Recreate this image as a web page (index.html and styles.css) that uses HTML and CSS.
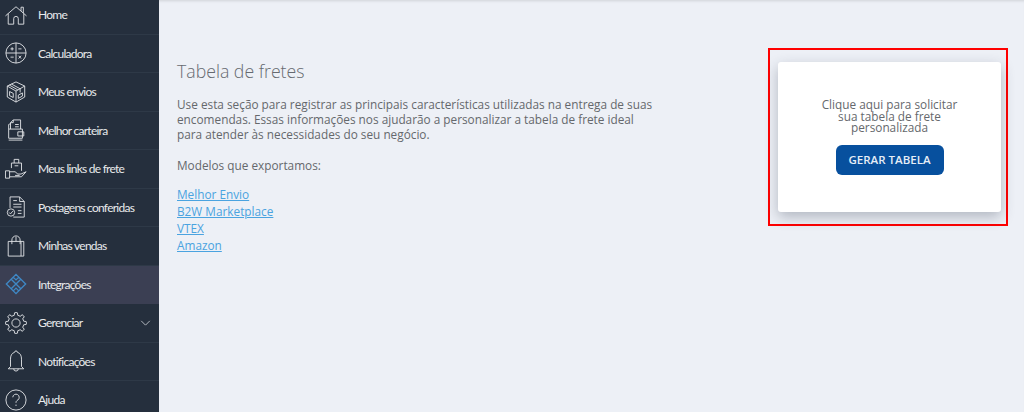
FILE: index.html
```html
<!DOCTYPE html>
<html lang="en">
  <head>
    <meta charset="UTF-8" />
    <title>Tabela de fretes</title>
    <link rel="stylesheet" href="styles.css">
  </head>
  <body>
    <nav class="sidebar">
      <a class="nav-item" href="#">
        <svg class="nav-icon" viewBox="0 0 24 24"><path d="M.5 13 12 3l11.500 10M3.500 10.500V22h6v-6a2.500 2.500 0 0 1 5 0v6h6V10.500M17.500 7.500V3.500h2.500v6.500"/></svg>
        <span>Home</span>
      </a>
      <a class="nav-item" href="#">
        <svg class="nav-icon" viewBox="0 0 24 24"><circle cx="12" cy="12" r="11"/><path d="M1 12h22M12 1v22M6 7.500h3.500M7.750 5.700v3.600M14.500 7.500H18M6 16.500h3.500M7.750 14.700v.1M7.750 18.200v.1M14.800 15l2.800 3M17.600 15l-2.800 3"/></svg>
        <span>Calculadora</span>
      </a>
      <a class="nav-item" href="#">
        <svg class="nav-icon" viewBox="0 0 24 24"><path d="M12 1 21.500 5.500v12L12 23l-9.500-5.500v-12zM2.500 5.500 12 11l9.500-5.500M12 11v12M7 3.300l9.500 5.200v4M5 11.500l4 2v4.500l-4-2zM14.500 15.500l4.500-2.500v3.500l-4.500 2.500zM4.500 4.300 14 9.700"/></svg>
        <span>Meus envios</span>
      </a>
      <a class="nav-item" href="#">
        <svg class="nav-icon" viewBox="0 0 24 24"><path d="M6 11V4l3-3h8v10M9 1v3H6M11 6h4M11 8.500h4M4 11h15v10H4zM4 23h15M14 14h6.500v4.500H14z"/><path d="M4 11V6l2-1"/></svg>
        <span>Melhor carteira</span>
      </a>
      <a class="nav-item" href="#">
        <svg class="nav-icon" viewBox="0 0 24 24"><path d="M7 11V5.500h11V14M10 5.500V1.500h5v4M10.500 8.500h4M.5 14h4.500v8H.5zM5 15h6l3 2.500h3.500l5.500-2.500-5 5.500H5M11 19h5"/></svg>
        <span>Meus links de frete</span>
      </a>
      <a class="nav-item" href="#">
        <svg class="nav-icon" viewBox="0 0 24 24"><path d="M5.500 13V1h10.500l5 5v17H9M16 1v5h5M9 5h4M9 9h9M9 12h9M14 16h4M14 19h4"/><circle cx="6.500" cy="18" r="4"/><path d="m4.500 18 1.500 1.500 2.500-3"/></svg>
        <span>Postagens conferidas</span>
      </a>
      <a class="nav-item" href="#">
        <svg class="nav-icon" viewBox="0 0 24 24"><path d="M3.500 7h17v16h-17zM7.500 10V5.500a4.500 4.500 0 0 1 9 0V10M17.500 7v16M12 2v5"/></svg>
        <span>Minhas vendas</span>
      </a>
      <a class="nav-item active" href="#">
        <svg class="nav-icon" viewBox="0 0 24 24"><path d="M12 1.500 22.500 12 12 22.500 1.500 12zM6.500 6.500l11 11M17.500 6.500l-11 11M9 4.500l3 3 3-3M9 19.500l3-3 3 3"/></svg>
        <span>Integrações</span>
      </a>
      <a class="nav-item" href="#">
        <svg class="nav-icon" viewBox="0 0 24 24">
          <circle cx="12" cy="12" r="4.500"/>
          <path id="gear-tooth" d="M8.710 4.050 10.070 3.620 10.400.9Q12 .3 13.600.9L13.930 3.620 15.290 4.050"/>
          <use href="#gear-tooth" transform="rotate(45 12 12)"/>
          <use href="#gear-tooth" transform="rotate(90 12 12)"/>
          <use href="#gear-tooth" transform="rotate(135 12 12)"/>
          <use href="#gear-tooth" transform="rotate(180 12 12)"/>
          <use href="#gear-tooth" transform="rotate(225 12 12)"/>
          <use href="#gear-tooth" transform="rotate(270 12 12)"/>
          <use href="#gear-tooth" transform="rotate(315 12 12)"/>
        </svg>
        <span>Gerenciar</span>
        <svg class="nav-arrow" viewBox="0 0 12 7"><path d="m1 1 5 5 5-5"/></svg>
      </a>
      <a class="nav-item" href="#">
        <svg class="nav-icon" viewBox="0 0 24 24"><path d="M12 1a1.500 1.500 0 0 1 1.500 1.500C17 3.500 18 6.500 18 10v8l2.500 2.500h-17L6 18v-8c0-3.500 1-6.500 4.500-7.500A1.500 1.500 0 0 1 12 1zM9.500 20.500a2.500 2.500 0 0 0 5 0"/></svg>
        <span>Notificações</span>
      </a>
      <a class="nav-item" href="#">
        <svg class="nav-icon" viewBox="0 0 24 24"><circle cx="12" cy="12" r="11"/><path d="M8.500 9a3.500 3.500 0 1 1 5.500 3c-1.500 1-2 1.500-2 3M12 17v1.500"/></svg>
        <span>Ajuda</span>
      </a>
    </nav>

    <main class="content">
      <section class="intro">
        <h1>Tabela de fretes</h1>
        <p>Use esta seção para registrar as principais características utilizadas na entrega de suas encomendas. Essas informações nos ajudarão a personalizar a tabela de frete ideal para atender às necessidades do seu negócio.</p>
        <p class="models-title">Modelos que exportamos:</p>
        <ul class="models">
          <li><a href="#">Melhor Envio</a></li>
          <li><a href="#">B2W Marketplace</a></li>
          <li><a href="#">VTEX</a></li>
          <li><a href="#">Amazon</a></li>
        </ul>
      </section>

      <aside class="highlight">
        <div class="card">
          <p>Clique aqui para solicitar sua tabela de frete personalizada</p>
          <button type="button">GERAR TABELA</button>
        </div>
      </aside>
    </main>
  </body>
</html>
```

FILE: styles.css
```css
body {
  margin: 0;
  display: flex;
  height: 412px;
  overflow: hidden;
  font-family: "Open Sans", Arial, sans-serif;
  background-color: #edf0f6;
  color: #65686c;
}

.sidebar {
  flex: 0 0 159px;
  margin-top: -4px;
  background-color: #252f3d;
}

.nav-item {
  display: flex;
  align-items: center;
  box-sizing: border-box;
  height: 38.500px;
  padding: 0 8px 0 5px;
  border-bottom: 1px solid #2e3947;
  color: #e8eaec;
  font-family: Lato, Arial, sans-serif;
  font-size: 12px;
  letter-spacing: -0.75px;
  text-decoration: none;
}

.nav-item.active {
  background-color: #3b3f53;
  border-bottom-color: #3b3f53;
}

.nav-icon {
  flex: none;
  width: 22px;
  height: 22px;
  margin-right: 11px;
  fill: none;
  stroke: #e0e3e6;
  stroke-width: 1;
}

.active .nav-icon {
  stroke: #3f88c5;
  stroke-width: 1.500;
}

.nav-arrow {
  width: 11px;
  height: 6px;
  margin-left: auto;
  fill: none;
  stroke: #c9ced4;
  stroke-width: 1;
}

.content {
  flex: 1;
  display: flex;
  justify-content: space-between;
  align-items: flex-start;
  box-shadow: inset 0 3px 3px -2px rgba(0, 0, 0, 0.12);
}

.intro {
  width: 480px;
  padding: 59px 0 0 18px;
}

h1 {
  margin: 0 0 14px;
  font-size: 17.700px;
  font-weight: 300;
  line-height: 24px;
  color: #666a70;
}

.intro p {
  margin: 0 0 16px;
  font-size: 11.800px;
  line-height: 15px;
}

.intro .models-title {
  margin-bottom: 13px;
}

.models {
  margin: 0;
  padding: 0;
  list-style: none;
  font-size: 11.800px;
  line-height: 17px;
}

.models a {
  color: #4aa3e0;
}

.highlight {
  margin: 48px 16px 0 0;
  padding: 12px 5px 12px 8px;
  border: 2px solid #f00;
}

.card {
  box-sizing: border-box;
  width: 223px;
  height: 150px;
  padding: 37px 0 0;
  background-color: #fff;
  border-radius: 3px;
  box-shadow: 0 5px 14px rgba(40, 50, 70, 0.3);
  text-align: center;
}

.card p {
  width: 150px;
  margin: 0 auto 11px;
  font-size: 11.800px;
  line-height: 11.500px;
}

.card button {
  width: 108px;
  height: 30px;
  padding: 0;
  border: none;
  border-radius: 6px;
  background-color: #07509e;
  color: #e6eef7;
  font-family: "Open Sans", Arial, sans-serif;
  font-size: 11.500px;
  font-weight: 600;
}
```
